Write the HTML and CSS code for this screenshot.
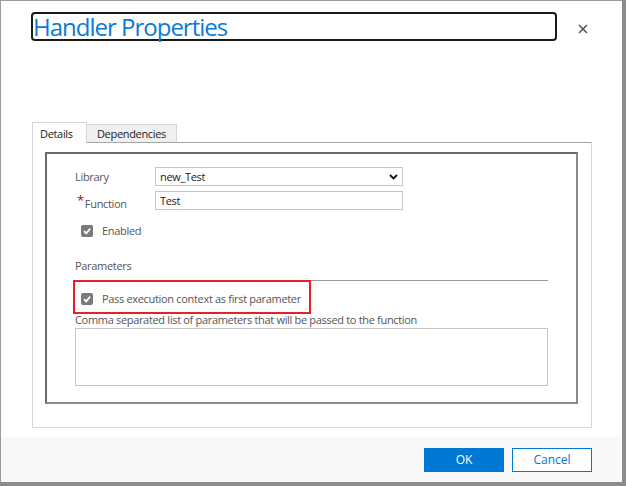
FILE: index.html
```html
<!DOCTYPE html>
<html>
<head>
<meta charset="utf-8">
<link rel="stylesheet" href="styles.css">
</head>
<body>
<div class="window">
  <header class="head">
    <h1 class="title">Handler Properties</h1>
    <button class="close" aria-label="Close">
      <svg width="10" height="10" viewBox="0 0 10 10"><path d="M1 1L9 9M9 1L1 9" stroke="#555" stroke-width="1.6" fill="none"/></svg>
    </button>
  </header>
  <main class="content">
    <div class="tabs">
      <div class="tab active">Details</div>
      <div class="tab">Dependencies</div>
    </div>
    <div class="panel">
      <div class="group">
        <div class="field">
          <span class="label">Library</span>
          <div class="select">
            <span>new_Test</span>
            <svg width="9" height="6" viewBox="0 0 9 6"><path d="M1 1L4.5 4.5L8 1" stroke="#111" stroke-width="1.8" fill="none"/></svg>
          </div>
        </div>
        <div class="field field-fn">
          <span class="label"><span class="req">*</span>Function</span>
          <div class="input">Test</div>
        </div>
        <div class="check check-enabled">
          <span class="box"><svg width="10" height="10" viewBox="0 0 10 10"><path d="M2 5.2L4.2 7.4L8.2 2.6" stroke="#fff" stroke-width="1.7" fill="none"/></svg></span>
          <span>Enabled</span>
        </div>
        <div class="section">Parameters</div>
        <div class="rule"></div>
        <div class="check highlight">
          <span class="box"><svg width="10" height="10" viewBox="0 0 10 10"><path d="M2 5.2L4.2 7.4L8.2 2.6" stroke="#fff" stroke-width="1.7" fill="none"/></svg></span>
          <span>Pass execution context as first parameter</span>
        </div>
        <div class="hint">Comma separated list of parameters that will be passed to the function</div>
        <div class="textarea"></div>
      </div>
    </div>
  </main>
  <footer class="foot">
    <button class="btn primary">OK</button>
    <button class="btn secondary">Cancel</button>
  </footer>
</div>
</body>
</html>
```
FILE: styles.css
```css
* { box-sizing: border-box; }
html, body { margin: 0; padding: 0; }
body {
  width: 626px;
  height: 486px;
  background: #8c8c8c;
  font-family: "Open Sans", "Noto Sans", sans-serif;
  font-size: 11px;
  letter-spacing: -0.32px;
  color: #444;
  overflow: hidden;
}
.window {
  width: 622px;
  height: 482px;
  background: #fff;
  border-left: 1px solid #9a9a9a;
  border-top: 1px solid #9a9a9a;
  display: flex;
  flex-direction: column;
}
.head {
  display: flex;
  align-items: center;
  padding: 11px 0 0 30px;
}
.title {
  margin: 0;
  width: 526px;
  height: 29px;
  border: 2px solid #1a1a1a;
  border-radius: 4px;
  font-family: "Open Sans", "Noto Sans", sans-serif;
  font-weight: 400;
  font-size: 24px;
  line-height: 25px;
  color: #0a7bd6;
  padding: 0;
  letter-spacing: -1px;
  white-space: nowrap;
}
.close {
  margin: 4px 0 0 20px;
  width: 12px;
  height: 12px;
  padding: 0;
  border: 0;
  background: none;
  display: flex;
  align-items: center;
  justify-content: center;
}
.content {
  flex: 1;
  padding: 81px 0 0 31px;
}
.tabs {
  display: flex;
  align-items: flex-end;
  height: 20px;
  position: relative;
  z-index: 1;
}
.tab {
  height: 18px;
  padding: 0 10px;
  border: 1px solid #d6d6d6;
  border-bottom: 0;
  background: #f0f0f0;
  color: #222;
  display: flex;
  align-items: center;
}
.tab.active {
  width: 55px;
  height: 21px;
  background: #fff;
  margin-bottom: -1px;
  padding: 0 0 0 7px;
}
.tab:not(.active) { width: 90px; border-left: 0; justify-content: center; }
.panel {
  width: 560px;
  height: 286px;
  border: 1px solid #d6d6d6;
  border-top-color: #a6a6a6;
  padding: 9px 13px 0 12px;
}
.group {
  height: 252px;
  border: 2px solid;
  border-color: #6a6a6a #8a8a8a #8a8a8a #6a6a6a;
  padding: 13px 28px 0 28px;
}
.field {
  display: flex;
  align-items: center;
  height: 19px;
}
.label {
  width: 80px;
  color: #555;
}
.field-fn { margin-top: 5px; }
.field-fn .label { padding: 4px 0 0 2px; }
.req {
  color: #c00000;
  font-size: 13px;
  position: relative;
  top: -3px;
  margin-right: 1px;
}
.select, .input {
  width: 248px;
  height: 19px;
  border: 1px solid #c6c6c6;
  display: flex;
  align-items: center;
  justify-content: space-between;
  padding: 0 3px 0 4px;
  color: #222;
}
.select svg { margin-right: 1px; }
.check {
  display: flex;
  align-items: center;
  color: #555;
}
.box {
  width: 12px;
  height: 12px;
  border-radius: 2px;
  background: #7a7a7a;
  display: flex;
  align-items: center;
  justify-content: center;
  margin-right: 9px;
}
.check-enabled { margin: 13px 0 0 6px; }
.section { margin-top: 20px; color: #555; }
.rule {
  margin-top: 7px;
  height: 1px;
  background: #9a9a9a;
  width: 473px;
}
.highlight {
  width: fit-content;
  margin: -1px 0 0 -2px;
  border: 2px solid #e8202a;
  padding: 9px 8px 6px 6px;
}
.hint { margin-top: -2px; color: #555; }
.textarea {
  margin-top: 1px;
  width: 473px;
  height: 58px;
  border: 1px solid #c6c6c6;
}
.foot {
  height: 45px;
  background: #f8f8f8;
  display: flex;
  justify-content: flex-end;
  align-items: center;
  padding: 0 30px 0 0;
  gap: 8px;
}
.btn {
  width: 80px;
  height: 24px;
  font-family: "Open Sans", "Noto Sans", sans-serif;
  font-size: 12px;
  border: 1px solid #0078d4;
  padding: 0;
}
.primary { background: #0078d4; color: #fff; }
.secondary { background: #fff; color: #0078d4; }
```
